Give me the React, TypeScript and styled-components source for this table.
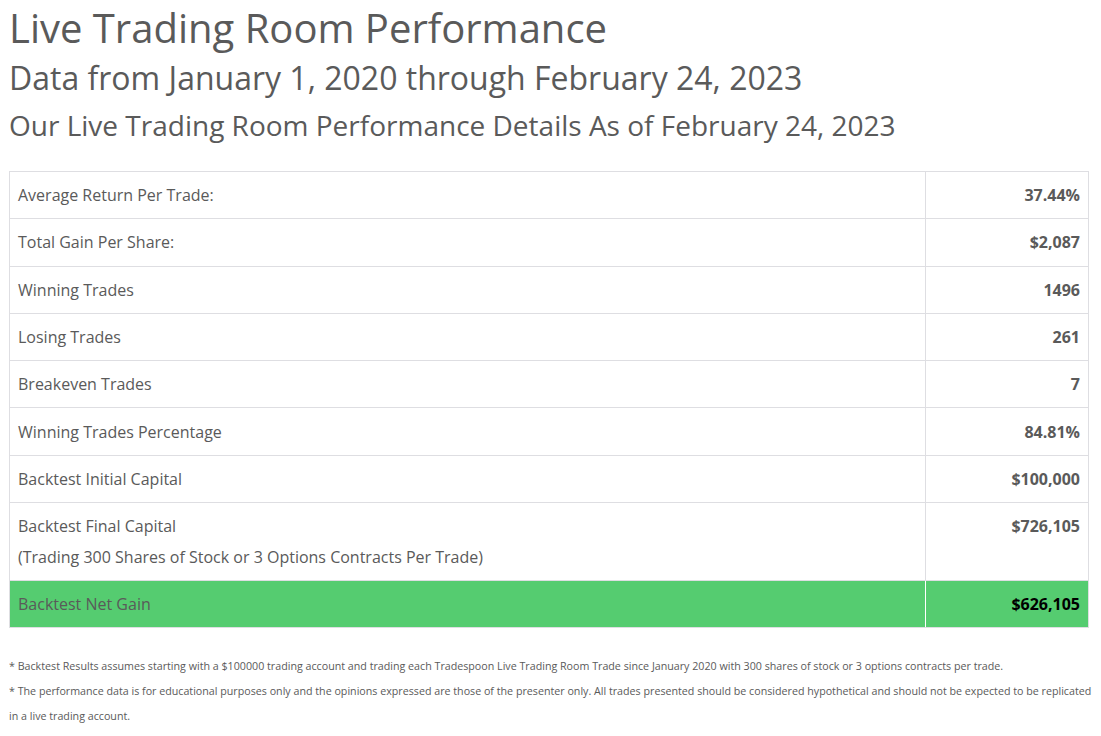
import React from 'react';
import styled, { createGlobalStyle } from 'styled-components';

const GlobalStyle = createGlobalStyle`
  body {
    margin: 0;
    background: #fff;
    font-family: 'Open Sans', 'Liberation Sans', sans-serif;
    color: #5a5a5a;
  }
`;

const Page = styled.div`
  padding: 0 12px 0 9px;
`;

const Title = styled.h1`
  margin: 0;
  padding-top: 2px;
  font-size: 40px;
  font-weight: 400;
  line-height: 52px;
`;

const SubTitle = styled.h2`
  margin: 0;
  font-size: 32px;
  font-weight: 400;
  line-height: 48px;
`;

const SmallTitle = styled.h3`
  margin: 0;
  font-size: 28px;
  font-weight: 400;
  line-height: 46px;
`;

const Table = styled.table`
  margin-top: 23px;
  width: 100%;
  border-collapse: collapse;
  font-size: 16px;
  line-height: 24px;
`;

const Row = styled.tr<{ $highlight?: boolean }>`
  background: ${({ $highlight }) => ($highlight ? '#55cc70' : '#fff')};
`;

const LabelCell = styled.td<{ $highlight?: boolean }>`
  border: 1px solid #dedee2;
  border-right-color: ${({ $highlight }) => ($highlight ? '#fff' : '#dedee2')};
  padding: 11.15px 8px;
  vertical-align: top;
`;

const ValueCell = styled.td<{ $highlight?: boolean }>`
  border: 1px solid #dedee2;
  padding: 11.15px 8px;
  width: 146px;
  text-align: right;
  vertical-align: top;
  font-weight: 700;
  color: ${({ $highlight }) => ($highlight ? '#000' : '#5a5a5a')};
`;

const SubLine = styled.div`
  margin-top: 6.8px;
`;

const Notes = styled.div`
  margin: 26px -8px 0 0;
  font-size: 10.7px;
  line-height: 25px;
`;

type Stat = { label: string; value: string; sub?: string };

const stats: Stat[] = [
  { label: 'Average Return Per Trade:', value: '37.44%' },
  { label: 'Total Gain Per Share:', value: '$2,087' },
  { label: 'Winning Trades', value: '1496' },
  { label: 'Losing Trades', value: '261' },
  { label: 'Breakeven Trades', value: '7' },
  { label: 'Winning Trades Percentage', value: '84.81%' },
  { label: 'Backtest Initial Capital', value: '$100,000' },
  {
    label: 'Backtest Final Capital',
    value: '$726,105',
    sub: '(Trading 300 Shares of Stock or 3 Options Contracts Per Trade)',
  },
];

export default function App() {
  return (
    <Page>
      <GlobalStyle />
      <Title>Live Trading Room Performance</Title>
      <SubTitle>Data from January 1, 2020 through February 24, 2023</SubTitle>
      <SmallTitle>Our Live Trading Room Performance Details As of February 24, 2023</SmallTitle>
      <Table>
        <tbody>
          {stats.map((s) => (
            <Row key={s.label}>
              <LabelCell>
                {s.label}
                {s.sub && <SubLine>{s.sub}</SubLine>}
              </LabelCell>
              <ValueCell>{s.value}</ValueCell>
            </Row>
          ))}
          <Row $highlight>
            <LabelCell $highlight>Backtest Net Gain</LabelCell>
            <ValueCell $highlight>$626,105</ValueCell>
          </Row>
        </tbody>
      </Table>
      <Notes>
        <div>
          * Backtest Results assumes starting with a $100000 trading account and trading each Tradespoon Live Trading
          Room Trade since January 2020 with 300 shares of stock or 3 options contracts per trade.
        </div>
        <div>
          * The performance data is for educational purposes only and the opinions expressed are those of the presenter
          only. All trades presented should be considered hypothetical and should not be expected to be replicated in a
          live trading account.
        </div>
      </Notes>
    </Page>
  );
}
